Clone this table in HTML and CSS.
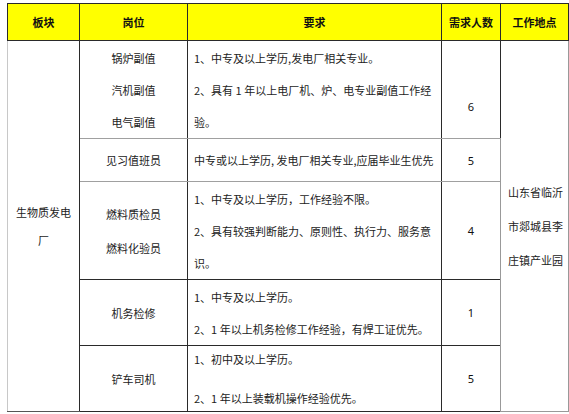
FILE: index.html
```html
<!DOCTYPE html>
<html lang="zh-CN">
<head>
<meta charset="utf-8">
<title>招聘岗位</title>
<link rel="stylesheet" href="styles.css">
</head>
<body>
<table class="jobs">
  <colgroup>
    <col class="c-sector">
    <col class="c-post">
    <col class="c-req">
    <col class="c-num">
    <col class="c-loc">
  </colgroup>
  <thead>
    <tr class="head">
      <th class="h-first">板块</th>
      <th>岗位</th>
      <th>要求</th>
      <th>需求人数</th>
      <th class="h-last">工作地点</th>
    </tr>
  </thead>
  <tbody>
    <tr class="r1">
      <td class="sector" rowspan="5">生物质发电厂</td>
      <td class="post soft-b"><p>锅炉副值</p><p>汽机副值</p><p>电气副值</p></td>
      <td class="req soft-b"><p>1、中专及以上学历,发电厂相关专业。</p><p>2、具有 1 年以上电厂机、炉、电专业副值工作经<br>验。</p></td>
      <td class="num soft-b num-low">6</td>
      <td class="loc" rowspan="5">山东省临沂市郯城县李庄镇产业园</td>
    </tr>
    <tr class="r2">
      <td class="post soft-b">见习值班员</td>
      <td class="req soft-b"><p>中专或以上学历, 发电厂相关专业,应届毕业生优先</p></td>
      <td class="num soft-b">5</td>
    </tr>
    <tr class="r3">
      <td class="post"><p class="tall">燃料质检员</p><p class="tall">燃料化验员</p></td>
      <td class="req"><p>1、中专及以上学历，工作经验不限。</p><p>2、具有较强判断能力、原则性、执行力、服务意<br>识。</p></td>
      <td class="num">4</td>
    </tr>
    <tr class="r4">
      <td class="post">机务检修</td>
      <td class="req"><p>1、中专及以上学历。</p><p>2、1 年以上机务检修工作经验，有焊工证优先。</p></td>
      <td class="num">1</td>
    </tr>
    <tr class="r5">
      <td class="post">铲车司机</td>
      <td class="req"><p class="loose">1、初中及以上学历。</p><p class="loose">2、1 年以上装载机操作经验优先。</p></td>
      <td class="num">5</td>
    </tr>
  </tbody>
</table>
</body>
</html>
```
FILE: styles.css
```css
body {
  margin: 0;
  background: #ffffff;
  font-family: "Noto Sans CJK SC", "Noto Sans", sans-serif;
  font-size: 11px;
  color: #222222;
}

.jobs {
  border-collapse: collapse;
  table-layout: fixed;
  width: 561px;
  margin: 3px 0 0 7px;
}

.c-sector { width: 72px; }
.c-post { width: 108px; }
.c-req { width: 254px; }
.c-num { width: 59px; }
.c-loc { width: 68px; }

.jobs th,
.jobs td {
  border: 1px solid #2a2a2a;
  padding: 0 6px;
  vertical-align: middle;
}

.jobs th {
  background: #ffff00;
  font-weight: bold;
  text-align: center;
  color: #111111;
  line-height: 16px;
}

.head { height: 37px; }
.r1 { height: 98px; }
.r2 { height: 43px; }
.r3 { height: 98px; }
.r4 { height: 66px; }
.r5 { height: 66px; }

.jobs p {
  margin: 0;
  line-height: 32px;
}

.jobs p.tall { line-height: 34px; }

.jobs p.loose {
  line-height: 26px;
}

.jobs p.loose + p.loose { margin-top: 13px; }

.h-first { border-left-color: #c8c8c8; }

.sector {
  text-align: center;
  line-height: 28px;
  border-left-color: #c8c8c8 !important;
  border-bottom-color: #555555 !important;
}

.post { text-align: center; }

.req {
  text-align: left;
  white-space: nowrap;
}

.num {
  text-align: center;
  font-family: "Noto Sans", sans-serif;
  font-size: 11px;
  color: #111111;
}

.num-low { padding-top: 34px !important; }

.loc {
  text-align: left;
  line-height: 34px;
  padding: 0 3px 0 7px !important;
  border-left-color: #999999 !important;
  border-right-color: #999999 !important;
  border-bottom-color: #999999 !important;
}

.jobs td.soft-b { border-bottom-color: #a0a0a0; }
```
